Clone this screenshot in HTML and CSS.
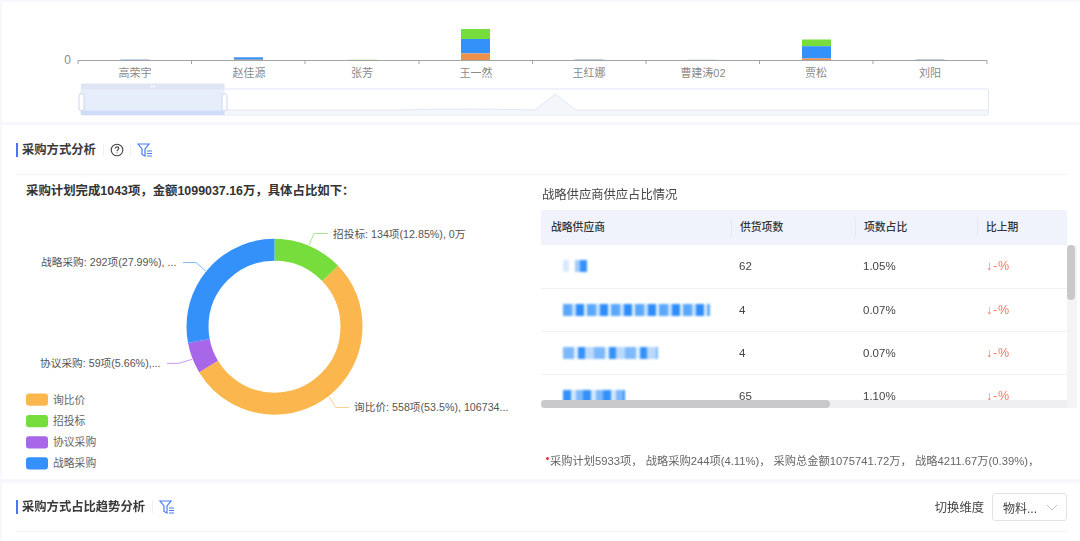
FILE: index.html
```html
<!DOCTYPE html>
<html lang="zh-CN">
<head>
<meta charset="utf-8">
<title>采购方式分析</title>
<link rel="stylesheet" href="styles.css">
</head>
<body>
<div class="page">
  <section class="card card-top">
    <svg class="canvas" width="1078" height="120" viewBox="2 2 1078 120">
      <g class="bars">
        <rect class="c-blue-soft" x="120.5" y="59.5" width="29" height="1"/>
        <rect class="c-blue" x="234" y="57.3" width="29" height="2.4"/><rect class="c-orange" x="234" y="59.7" width="29" height="1"/>
        <rect class="c-green" x="348" y="59.8" width="29" height="0.7"/>
        <rect class="c-green" x="461" y="29" width="29" height="10"/><rect class="c-blue" x="461" y="39" width="29" height="14.4"/><rect class="c-orange" x="461" y="53.4" width="29" height="7"/>
        <rect class="c-teal" x="574.5" y="59.5" width="29" height="1"/>
        <rect class="c-teal" x="688" y="59.8" width="29" height="0.7"/>
        <rect class="c-green" x="802" y="39.5" width="29" height="6.7"/><rect class="c-blue" x="802" y="46.2" width="29" height="12.3"/><rect class="c-orange" x="802" y="58.5" width="29" height="2"/>
        <rect class="c-teal" x="915.5" y="59.5" width="29" height="1"/>
      </g>
      <path class="axis" d="M78 64V60.5H987V64M191.5 60.5V64M305 60.5V64M419 60.5V64M532.5 60.5V64M646 60.5V64M759.5 60.5V64M873 60.5V64"/>
      <g class="axis-text">
        <text class="zero" x="71" y="64">0</text>
        <text x="135" y="77">高荣宇</text><text x="249" y="77">赵佳源</text><text x="362" y="77">张芳</text><text x="476" y="77">王一然</text>
        <text x="589" y="77">王红娜</text><text x="703" y="77">曹建涛02</text><text x="816" y="77">贾松</text><text x="930" y="77">刘阳</text>
      </g>
      <rect class="zoom-frame" x="81" y="89" width="907.5" height="26" rx="2"/>
      <path class="zoom-area" d="M81 110H400C440 108.5 500 109 535 110L555 94L576 110H988.5V114.5H81Z"/>
      <path class="zoom-line" d="M81 110H400C440 108.5 500 109 535 110L555 94L576 110H988.5"/>
      <rect class="zoom-sel" x="81" y="89.5" width="143.5" height="21"/>
      <rect class="zoom-top" x="81" y="83.5" width="143.5" height="6"/>
      <rect class="zoom-grip" x="151" y="85.5" width="1.5" height="2"/>
      <rect class="zoom-grip" x="153.5" y="85.5" width="1.5" height="2"/>
      <rect class="zoom-low" x="81" y="110.5" width="143.5" height="4.5"/>
      <rect class="zoom-handle" x="79" y="94" width="5" height="16.5" rx="1.5"/>
      <rect class="zoom-handle" x="222" y="94" width="5" height="16.5" rx="1.5"/>
    </svg>
  </section>

  <section class="card card-mid">
    <header class="card-head">
      <h2 class="title">采购方式分析</h2>
      <span class="sep"></span>
      <svg class="ico-help" width="14" height="14" viewBox="0 0 14 14"><circle cx="7" cy="7" r="5.8"/><path d="M5.2 5.6C5.2 4.5 6 3.9 7 3.9S8.8 4.6 8.8 5.5C8.8 6.7 7 6.8 7 8.2"/><path d="M7 9.5V10.3"/></svg>
      <span class="sep"></span>
      <svg class="ico-filter" width="15" height="14" viewBox="0 0 15 14"><path d="M1 1H12L8 6V13L5 11.5V6Z"/><path d="M10 8H15M10 10.5H15M10 13H15"/></svg>
    </header>
    <div class="mid-body">
      <div class="pie-pane">
        <p class="summary">采购计划完成1043项，金额1099037.16万，具体占比如下：</p>
        <svg class="canvas" width="525" height="279" viewBox="16 200 525 279">
          <g class="donut">
            <circle class="s-orange" cx="274.5" cy="326.7" r="77" pathLength="100" stroke-dasharray="53.5 46.5" stroke-dashoffset="-12.85" transform="rotate(-90 274.5 326.7)"/>
            <circle class="s-green" cx="274.5" cy="326.7" r="77" pathLength="100" stroke-dasharray="12.85 87.15" transform="rotate(-90 274.5 326.7)"/>
            <circle class="s-purple" cx="274.5" cy="326.7" r="77" pathLength="100" stroke-dasharray="5.66 94.34" stroke-dashoffset="-66.35" transform="rotate(-90 274.5 326.7)"/>
            <circle class="s-blue" cx="274.5" cy="326.7" r="77" pathLength="100" stroke-dasharray="27.99 72.01" stroke-dashoffset="-72.01" transform="rotate(-90 274.5 326.7)"/>
          </g>
          <path class="lead l-green" d="M309 245L314 233.5H328"/>
          <path class="lead l-blue" d="M207 272L196 262.5H183"/>
          <path class="lead l-purple" d="M192 359.3L179 363.3H167"/>
          <path class="lead l-orange" d="M329 396.7L336 407.5H349"/>
          <g class="pie-text">
            <text x="333" y="238">招投标: 134项(12.85%), 0万</text>
            <text x="41" y="266">战略采购: 292项(27.99%), ...</text>
            <text x="40" y="367">协议采购: 59项(5.66%),...</text>
            <text x="354" y="411">询比价: 558项(53.5%), 106734...</text>
          </g>
          <g class="legend">
            <rect class="c-amber" x="26" y="393.5" width="22" height="12.3" rx="3"/><text x="53" y="403.5">询比价</text>
            <rect class="c-green" x="26" y="415" width="22" height="12.3" rx="3"/><text x="53" y="425">招投标</text>
            <rect class="c-purple" x="26" y="436.3" width="22" height="12.3" rx="3"/><text x="53" y="446.3">协议采购</text>
            <rect class="c-blue" x="26" y="457.3" width="22" height="12.3" rx="3"/><text x="53" y="467.3">战略采购</text>
          </g>
        </svg>
      </div>
      <div class="table-pane">
        <h3 class="table-title">战略供应商供应占比情况</h3>
        <div class="table-wrap">
          <table class="data">
            <thead><tr><th>战略供应商</th><th>供货项数</th><th>项数占比</th><th>比上期</th></tr></thead>
            <tbody>
              <tr><td><span class="smear w1"></span></td><td>62</td><td>1.05%</td><td class="down">↓-%</td></tr>
              <tr><td><span class="smear w2"></span></td><td>4</td><td>0.07%</td><td class="down">↓-%</td></tr>
              <tr><td><span class="smear w3"></span></td><td>4</td><td>0.07%</td><td class="down">↓-%</td></tr>
              <tr><td><span class="smear w4"></span></td><td>65</td><td>1.10%</td><td class="down">↓-%</td></tr>
            </tbody>
          </table>
          <div class="vbar"><div class="vthumb"></div></div>
          <div class="hbar"><div class="hthumb"></div></div>
        </div>
        <p class="note"><span class="dot"></span>采购计划5933项， 战略采购244项(4.11%)， 采购总金额1075741.72万， 战略4211.67万(0.39%)，</p>
      </div>
    </div>
  </section>

  <section class="card card-low">
    <header class="card-head low-head">
      <h2 class="title">采购方式占比趋势分析</h2>
      <span class="sep"></span>
      <svg class="ico-filter" width="15" height="14" viewBox="0 0 15 14"><path d="M1 1H12L8 6V13L5 11.5V6Z"/><path d="M10 8H15M10 10.5H15M10 13H15"/></svg>
      <div class="switcher">
        <span class="switch-label">切换维度</span>
        <div class="select"><span>物料...</span>
          <svg class="chev" width="12" height="7" viewBox="0 0 12 7"><path d="M1 1L6 6L11 1"/></svg>
        </div>
      </div>
    </header>
  </section>
</div>
</body>
</html>
```
FILE: styles.css
```css
* { box-sizing: border-box; }
html, body { margin: 0; padding: 0; height: 100%; overflow: hidden; }
body { background: #f7f8fd; font-family: "Liberation Sans", "Noto Sans CJK SC", sans-serif; color: #333; }
.page { height: 541px; padding-left: 2px; display: flex; flex-direction: column; filter: blur(0.35px); }
.card { background: #fff; flex: none; }
.canvas { display: block; }
.card-top { height: 120px; margin-top: 2px; }
.card-mid { height: 354px; margin-top: 3px; padding: 0 12px 0 14px; }
.card-low { height: 58px; margin-top: 4px; padding: 0 12px 0 14px; }

.c-blue { fill: #3491fa; }
.c-blue-soft { fill: #7fa8dd; }
.c-green { fill: #76dd3c; }
.c-orange { fill: #ee8f4c; }
.c-teal { fill: #7fa8bd; }
.c-amber { fill: #fbb64e; }
.c-purple { fill: #a866e8; }

.axis { fill: none; stroke: #a3a3a3; stroke-width: 1; }
.axis-text text { font-size: 11px; fill: #8a8a8a; text-anchor: middle; }
.axis-text .zero { font-size: 12px; text-anchor: end; }
.zoom-frame { fill: #fff; stroke: #dfe5f5; }
.zoom-area { fill: #f4f6fb; }
.zoom-line { fill: none; stroke: #e3e8f5; }
.zoom-sel { fill: #e6edfb; }
.zoom-top { fill: #dfe5f3; }
.zoom-grip { fill: #fff; }
.zoom-low { fill: #cfdcf8; }
.zoom-handle { fill: #fff; stroke: #cdd6ee; }

.card-head { height: 50px; display: flex; align-items: center; border-bottom: 1px solid #f2f3f7; }
.title { margin: 0; padding-left: 4px; border-left: 2px solid #4a74f5; font-size: 12.3px; line-height: 14px; font-weight: 700; color: #3a3a3a; white-space: nowrap; }
.sep { width: 1px; height: 12px; background: #eff0f3; margin: 0 7px; }
.ico-help { fill: none; stroke: #444; stroke-width: 1.1; margin: 0 -1px; }
.ico-filter { fill: none; stroke: #4a7bf7; stroke-width: 1.2; margin-left: -1px; }

.mid-body { display: grid; grid-template-columns: 525px 527px; }
.summary { margin: 0; padding: 7px 0 0 10px; height: 25px; line-height: 18px; font-size: 12.4px; font-weight: 700; color: #333; white-space: nowrap; }
.donut circle { fill: none; stroke-width: 22; }
.s-orange { stroke: #fbb64e; }
.s-green { stroke: #76dd3c; }
.s-purple { stroke: #a866e8; }
.s-blue { stroke: #3491fa; }
.lead { fill: none; stroke-width: 1; }
.l-green { stroke: #a5e888; }
.l-blue { stroke: #85bdfb; }
.l-purple { stroke: #c79bf0; }
.l-orange { stroke: #fcd08f; }
.pie-text text { font-size: 10.7px; fill: #555; }
.legend text { font-size: 10.8px; fill: #666; }

.table-title { margin: 0; padding: 11px 0 0 1px; height: 35px; line-height: 18px; font-size: 12.3px; font-weight: 400; color: #444; }
.table-wrap { position: relative; width: 536px; height: 198px; overflow: hidden; }
.data { width: 526px; border-collapse: collapse; table-layout: fixed; font-size: 11.5px; color: #444; }
.data th { position: relative; height: 35px; padding: 0 0 3px 9px; background: #f0f3fb; text-align: left; font-weight: 500; font-size: 10.8px; color: #333; }
.data th:nth-child(1) { width: 190px; padding-left: 10px; }
.data th:nth-child(2) { width: 124px; }
.data th:nth-child(3) { width: 122px; }
.data th + th::before { content: ""; position: absolute; left: 0; top: 8px; bottom: 8px; width: 1px; background: #e6e9f2; }
.data td { height: 43px; padding: 0 0 0 8px; border-bottom: 1px solid #f0f1f5; }
.data .down { color: #f5795a; padding-left: 9px; font-size: 12.5px; letter-spacing: 0.8px; }
.smear { display: block; height: 12px; margin-left: 14px; filter: blur(0.8px); }
.w1 { width: 24px; background: linear-gradient(90deg, #d7e9fe 0 25%, #fff 25% 50%, #9fcbfc 50% 70%, #3491fa 70% 100%); }
.w2 { width: 147px; background: repeating-linear-gradient(90deg, #5aa7fb 0 9px, #c4dffd 9px 13px, #2e8dfa 13px 21px, #e3f0ff 21px 24px); }
.w3 { width: 95px; background: repeating-linear-gradient(90deg, #7db9fb 0 11px, #e3f0ff 11px 15px, #3491fa 15px 22px, #b9d9fd 22px 31px); }
.w4 { width: 62px; background: repeating-linear-gradient(90deg, #3491fa 0 8px, #d3e6fe 8px 13px, #7db9fb 13px 20px); }
.vbar { position: absolute; right: 0; top: 35px; bottom: 0; width: 10px; background: #f4f4f5; }
.vthumb { width: 8px; height: 55px; border-radius: 4px; background: #c9c9cb; }
.hbar { position: absolute; left: 0; bottom: 0; width: 526px; height: 8px; background: rgba(236, 236, 238, 0.85); }
.hthumb { width: 289px; height: 8px; border-radius: 4px; background: #c9c9cb; }
.note { margin: 45px 0 0; padding-left: 5px; line-height: 16px; font-size: 11.25px; color: #666; white-space: nowrap; }
.dot { display: inline-block; width: 3px; height: 3px; margin-right: 1px; border-radius: 50%; background: #e8302f; vertical-align: 5px; }

.low-head { height: 49px; }
.switcher { margin: 0 1px 0 auto; display: flex; align-items: center; gap: 8px; }
.switch-label { font-size: 12.3px; color: #444; }
.select { width: 75px; height: 28px; display: flex; align-items: center; justify-content: space-between; padding: 0 8px 0 10px; border: 1px solid #e2e2e5; border-radius: 3px; font-size: 12px; color: #444; }
.chev { fill: none; stroke: #bbb; stroke-width: 1; }
```
